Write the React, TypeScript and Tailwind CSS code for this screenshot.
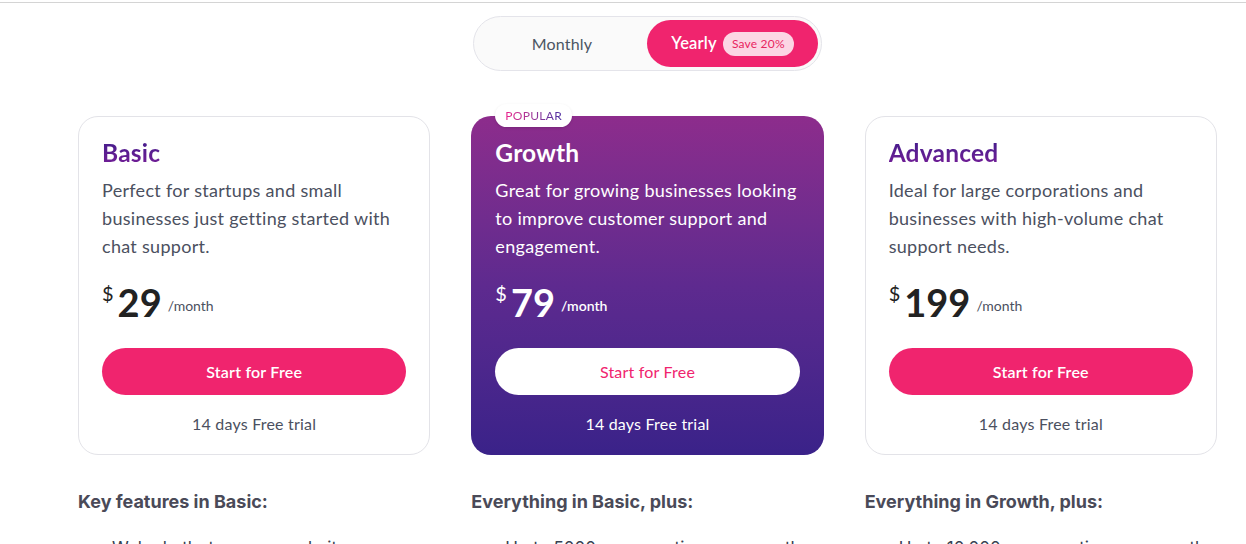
import { Check } from "lucide-react";

const plans = [
  {
    name: "Basic",
    desc: "Perfect for startups and small businesses just getting started with chat support.",
    price: "29",
    featured: false,
    heading: "Key features in Basic:",
    first: "Web chatbot on your website",
  },
  {
    name: "Growth",
    desc: "Great for growing businesses looking to improve customer support and engagement.",
    price: "79",
    featured: true,
    heading: "Everything in Basic, plus:",
    first: "Up to 5000 conversations per month",
  },
  {
    name: "Advanced",
    desc: "Ideal for large corporations and businesses with high-volume chat support needs.",
    price: "199",
    featured: false,
    heading: "Everything in Growth, plus:",
    first: "Up to 10,000 conversations per month",
  },
];

export default function App() {
  return (
    <div className="min-h-screen bg-white font-['Lato','Noto_Sans',sans-serif] overflow-hidden">
      <div className="h-[2px] bg-white" />
      <div className="h-px bg-[#d4d4d4]" />

      <div className="ml-[78px] w-[1139px] pt-[13px]">
        {/* billing toggle */}
        <div className="flex justify-center">
          <div className="flex items-center w-[349px] h-[55px] rounded-full border border-[#e4e4ea] bg-[#fafafa] p-[3px]">
            <button className="flex-1 h-full text-[16px] tracking-[0.2px] text-[#4b5563]">Monthly</button>
            <button className="w-[171px] h-[47px] rounded-full bg-[#f0246e] flex items-center justify-center gap-[6px]">
              <span className="text-white text-[16.5px] font-semibold tracking-[0.2px]">Yearly</span>
              <span className="bg-[#fcd6e4] text-[#e8245f] text-[12px] tracking-[0.2px] rounded-full px-[9px] py-[3px] leading-[18px]">
                Save 20%
              </span>
            </button>
          </div>
        </div>

        {/* cards */}
        <div className="grid grid-cols-3 gap-[41px] mt-[45px]">
          {plans.map((p) => (
            <div key={p.name} className="flex flex-col">
              <div
                className={
                  p.featured
                    ? "relative h-[339px] rounded-[20px] bg-gradient-to-b from-[#8d2c8c] via-[#5e2a8f] to-[#3a2289] px-[24px] pt-[22px] text-white"
                    : "relative h-[339px] rounded-[20px] border border-[#e3e3e8] bg-white px-[23px] pt-[21px]"
                }
              >
                {p.featured && (
                  <span className="absolute left-[24px] -top-[12px] bg-white rounded-full px-[10px] h-[23px] flex items-center text-[12px] tracking-[0.3px] shadow-sm">
                    <span className="bg-gradient-to-r from-[#ec1c8c] to-[#4a2aa0] bg-clip-text text-transparent">POPULAR</span>
                  </span>
                )}
                <h2
                  className={
                    p.featured
                      ? "text-[24.5px] font-bold leading-[30px] tracking-[0.2px] text-white"
                      : "text-[24.5px] font-bold leading-[30px] tracking-[0.2px] bg-gradient-to-b from-[#3e1a8a] to-[#7a1c98] bg-clip-text text-transparent w-fit"
                  }
                >
                  {p.name}
                </h2>
                <p
                  className={
                    p.featured
                      ? "mt-[8px] text-[18px] leading-[28px] tracking-[0.3px] text-white"
                      : "mt-[8px] text-[18px] leading-[28px] tracking-[0.3px] text-[#4b5060]"
                  }
                >
                  {p.desc}
                </p>
                <div className="mt-[22px] flex items-end h-[40px]">
                  <span className={p.featured ? "self-start text-[20px] leading-[22px] text-white" : "self-start text-[20px] leading-[22px] text-[#222]"}>$</span>
                  <span className={p.featured ? "ml-[4px] text-[38px] font-bold leading-[40px] text-white" : "ml-[4px] text-[38px] font-bold leading-[40px] text-[#222]"}>
                    {p.price}
                  </span>
                  <span className={p.featured ? "ml-[6px] mb-[6px] text-[14px] font-semibold text-white" : "ml-[6px] mb-[6px] text-[14px] text-[#4b5060]"}>
                    /month
                  </span>
                </div>
                <button
                  className={
                    p.featured
                      ? "mt-[26px] w-full h-[47px] rounded-full bg-white text-[#f0246e] text-[16px] tracking-[0.2px]"
                      : "mt-[26px] w-full h-[47px] rounded-full bg-[#f0246e] text-white text-[16px] tracking-[0.2px] font-semibold"
                  }
                >
                  Start for Free
                </button>
                <p className={p.featured ? "mt-[17px] text-center text-[16px] tracking-[0.2px] text-white" : "mt-[17px] text-center text-[16px] tracking-[0.2px] text-[#4b5060]"}>
                  14 days Free trial
                </p>
              </div>

              <h3 className="mt-[33px] font-['Inter',sans-serif] text-[18px] font-bold text-[#4a4a58]">{p.heading}</h3>
              <div className="mt-[21px] flex items-center gap-[10px] pl-[8px]">
                <Check size={16} strokeWidth={3} className="text-[#5b2a9a]" />
                <span className="font-['Inter',sans-serif] text-[17px] text-[#374151]">{p.first}</span>
              </div>
            </div>
          ))}
        </div>
      </div>
    </div>
  );
}
